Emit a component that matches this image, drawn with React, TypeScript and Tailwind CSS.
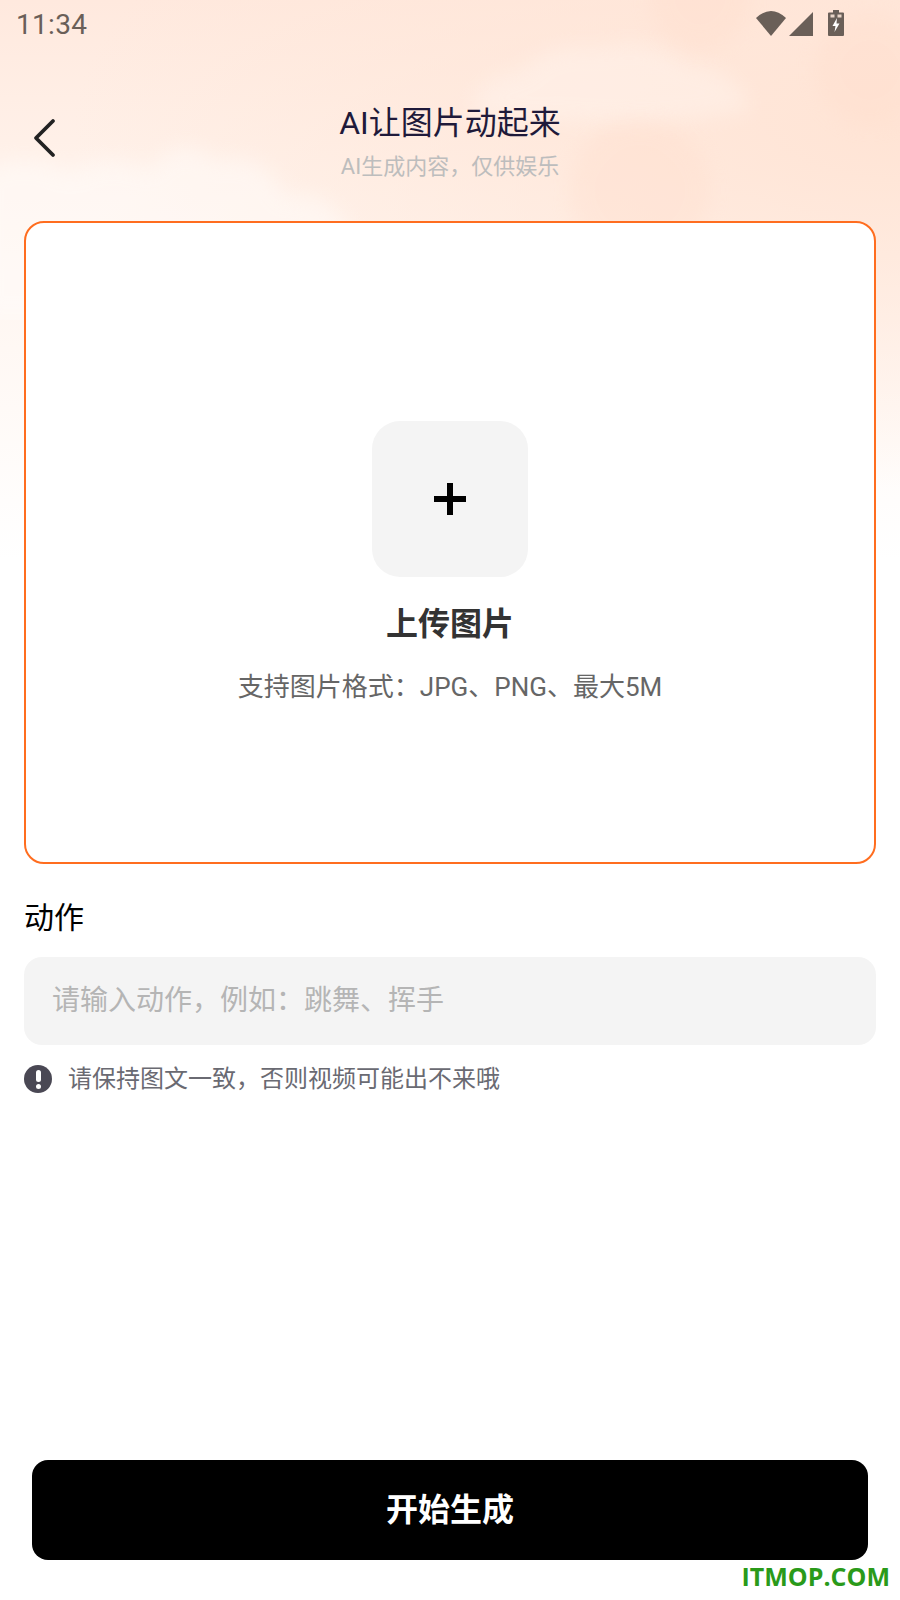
const cjk = "font-['Roboto','Noto_Sans_CJK_SC',sans-serif]";

function StatusIcons() {
  return (
    <div className="flex items-start">
      {/* wifi */}
      <svg width="30" height="25" viewBox="0 0 30 25" className="mt-[1px]">
        <path d="M0 7 Q15 -7 30 7 L15 25 Z" fill="#6a5f58" />
      </svg>
      {/* signal */}
      <svg width="24" height="24" viewBox="0 0 24 24" className="ml-[3px] mt-[2px]">
        <path d="M24 0 V24 H0 Z" fill="#6a5f58" />
      </svg>
      {/* battery, charging */}
      <svg width="16" height="26" viewBox="0 0 16 26" className="ml-[15px]">
        <path d="M5 0 H11 V2.5 H15 Q16 2.5 16 3.5 V25 Q16 26 15 26 H1 Q0 26 0 25 V3.5 Q0 2.5 1 2.5 H5 Z" fill="#6a5f58" />
        <rect x="2.5" y="4.5" width="4" height="3" fill="#e9d5c8" />
        <rect x="9.5" y="4.5" width="4" height="3" fill="#e9d5c8" />
        <path d="M9 8 L4.5 16 H7.5 L6.5 22 L11.5 13.5 H8.5 Z" fill="#fff" />
      </svg>
    </div>
  );
}

// soft clouds drifting across the header sky
function Clouds() {
  return (
    <svg width="900" height="320" viewBox="0 0 900 320" className="absolute left-0 top-0">
      <defs>
        <filter id="soft" x="-20%" y="-20%" width="140%" height="140%">
          <feGaussianBlur stdDeviation="10" />
        </filter>
      </defs>
      <g fill="#fff" opacity="0.4" filter="url(#soft)">
        <path d="M-20 320 V170 Q30 150 70 172 Q110 150 150 170 Q180 130 215 160 Q265 150 285 195 Q330 190 350 230 L380 320 Z" />
      </g>
      <g fill="#fff" opacity="0.25" filter="url(#soft)">
        <path d="M470 110 Q480 75 520 72 Q550 40 600 48 Q650 35 690 65 Q740 70 750 110 Q650 130 560 120 Q510 125 470 110 Z" />
      </g>
      <g fill="#ffd9c6" opacity="0.25" filter="url(#soft)">
        <circle cx="870" cy="70" r="55" />
        <circle cx="700" cy="0" r="50" />
        <circle cx="640" cy="190" r="70" />
      </g>
    </svg>
  );
}

export default function App() {
  return (
    <div className={`relative w-[900px] h-[1600px] overflow-hidden bg-white ${cjk}`}>
      {/* peach sky behind the header */}
      <div className="absolute inset-x-0 top-0 h-[560px] bg-gradient-to-b from-[#ffe9de] via-[#fff3ec] via-35% to-white" />
      <div className="absolute inset-x-0 top-0 h-[520px] bg-[radial-gradient(ellipse_at_100%_25%,#ffe4d5_0%,transparent_65%)]" />
      <Clouds />

      <div className="relative flex flex-col h-full">
        <div className="h-[50px] flex justify-between pl-[16px] pr-[56px] pt-[10px]">
          <span className="text-[28px] leading-[30px] tracking-[0.3px] text-[#6a5f58]">11:34</span>
          <StatusIcons />
        </div>

        <div className="relative h-[171px] flex flex-col items-center pt-[53px]">
          <button className="absolute left-[32px] top-[68px]">
            <svg width="26" height="40" viewBox="0 0 26 40" fill="none" stroke="#222" strokeWidth="3.8" strokeLinecap="round" strokeLinejoin="round">
              <path d="M21 3 L4 20 L21 37" />
            </svg>
          </button>
          <h1 className="text-[32px] leading-[40px] font-normal text-[#1f1a3a]">AI让图片动起来</h1>
          <p className="text-[22px] leading-[30px] mt-[9px] text-[#bdbdbd]">AI生成内容，仅供娱乐</p>
        </div>

        <div className="mx-[24px] h-[643px] border-2 border-[#ff6d1f] rounded-[20px] bg-white flex flex-col items-center pt-[198px]">
          <div className="w-[156px] h-[156px] rounded-[28px] bg-[#f4f4f4] flex items-center justify-center">
            <svg width="32" height="32" viewBox="0 0 32 32" fill="#000">
              <rect x="13" y="0" width="6" height="32" />
              <rect x="0" y="13" width="32" height="6" />
            </svg>
          </div>
          <div className="mt-[26px] text-[32px] leading-[42px] font-bold text-[#333]">上传图片</div>
          <div className="mt-[25px] text-[26px] leading-[34px] text-[#666]">支持图片格式：JPG、PNG、最大5M</div>
        </div>

        <div className="mx-[24px] mt-[34px] text-[30px] leading-[40px] text-black">动作</div>

        <div className="mx-[24px] mt-[19px] h-[88px] rounded-[18px] bg-[#f4f4f4] flex items-center pl-[28px] text-[28px] text-[#b5b5b5]">
          请输入动作，例如：跳舞、挥手
        </div>

        <div className="mx-[24px] mt-[20px] flex items-center">
          <div className="w-[28px] h-[28px] rounded-full bg-[#4a4854] flex flex-col items-center justify-center">
            <span className="w-[5px] h-[12px] rounded-full bg-white" />
            <span className="w-[5px] h-[5px] mt-[2px] rounded-full bg-white" />
          </div>
          <span className="ml-[16px] text-[24px] leading-[28px] text-[#6a6a72]">请保持图文一致，否则视频可能出不来哦</span>
        </div>

        <div className="flex-1" />

        <button className="mx-[32px] h-[100px] rounded-[16px] bg-black text-white text-[32px] font-bold">开始生成</button>
        <div className="h-[40px] flex justify-end pr-[10px] font-['Open_Sans',sans-serif] text-[25px] leading-[32px] font-bold text-[#2a9a1a]">
          ITMOP.COM
        </div>
      </div>
    </div>
  );
}
